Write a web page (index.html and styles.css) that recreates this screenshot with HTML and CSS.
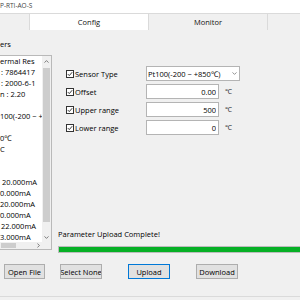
FILE: index.html
```html
<!DOCTYPE html>
<html lang="en">
<head>
  <meta charset="UTF-8" />
  <meta name="viewport" content="width=device-width, initial-scale=1.0"/>
  <title>P-RTI-AO-S Config</title>
  <link rel="stylesheet" href="styles.css">
</head>
<body>
  <div class="window">
    <div class="titlebar">P-RTI-AO-S</div>

    <div class="tabs">
      <div class="tab tab-edge"></div>
      <div class="tab active">Config</div>
      <div class="tab">Monitor</div>
      <div class="tab tab-rest"></div>
    </div>

    <div class="panel">
      <div class="body">
        <div class="params">
          <div class="group-label">ers</div>
          <div class="listbox">
            <div class="list-items">
              <div>ermal Res</div>
              <div class="in1">: 7864417</div>
              <div class="in1">: 2000-6-1</div>
              <div>n : 2.20</div>
              <div></div>
              <div>100(-200 ~ +</div>
              <div></div>
              <div>0℃</div>
              <div>C</div>
              <div></div>
              <div></div>
              <div class="in2">20.000mA</div>
              <div>0.000mA</div>
              <div>20.000mA</div>
              <div>0.000mA</div>
              <div class="in1">22.000mA</div>
              <div>3.000mA</div>
            </div>
            <div class="vscroll">
              <span class="arrow">
                <svg width="5" height="3" viewBox="0 0 5 3"><path d="M0.5 2.6 L2.5 0.6 L4.5 2.6" fill="none" stroke="#606060" stroke-width="0.8"/></svg>
              </span>
              <div class="vthumb"></div>
              <div class="track"></div>
              <span class="arrow">
                <svg width="5" height="3" viewBox="0 0 5 3"><path d="M0.5 0.4 L2.5 2.4 L4.5 0.4" fill="none" stroke="#606060" stroke-width="0.8"/></svg>
              </span>
            </div>
            <div class="hscroll">
              <div class="hthumb"></div>
              <span class="arrow">
                <svg width="3" height="5" viewBox="0 0 3 5"><path d="M0.4 0.5 L2.4 2.5 L0.4 4.5" fill="none" stroke="#606060" stroke-width="0.8"/></svg>
              </span>
            </div>
            <div class="corner"></div>
          </div>
        </div>

        <div class="config">
          <div class="form">
            <label class="check"><span class="box"><svg width="6" height="6" viewBox="0 0 6 6"><path d="M0.8 3.1 L2.3 4.6 L5.2 1.2" fill="none" stroke="#222" stroke-width="0.9"/></svg></span>Sensor Type</label>
            <div class="combo">
              <span>Pt100(-200 ~ +850℃)</span>
              <svg width="5" height="3" viewBox="0 0 5 3"><path d="M0.5 0.4 L2.5 2.4 L4.5 0.4" fill="none" stroke="#777" stroke-width="0.8"/></svg>
            </div>

            <label class="check"><span class="box"><svg width="6" height="6" viewBox="0 0 6 6"><path d="M0.8 3.1 L2.3 4.6 L5.2 1.2" fill="none" stroke="#222" stroke-width="0.9"/></svg></span>Offset</label>
            <input class="num" type="text" value="0.00">
            <span class="unit">℃</span>

            <label class="check"><span class="box"><svg width="6" height="6" viewBox="0 0 6 6"><path d="M0.8 3.1 L2.3 4.6 L5.2 1.2" fill="none" stroke="#222" stroke-width="0.9"/></svg></span>Upper range</label>
            <input class="num" type="text" value="500">
            <span class="unit">℃</span>

            <label class="check"><span class="box"><svg width="6" height="6" viewBox="0 0 6 6"><path d="M0.8 3.1 L2.3 4.6 L5.2 1.2" fill="none" stroke="#222" stroke-width="0.9"/></svg></span>Lower range</label>
            <input class="num" type="text" value="0">
            <span class="unit">℃</span>
          </div>

          <div class="status">Parameter Upload Complete!</div>
          <div class="progress"><div class="progress-fill" style="width:100%"></div></div>
        </div>
      </div>

      <div class="buttons">
        <button class="btn btn-open">Open File</button>
        <button class="btn">Select None</button>
        <button class="btn btn-default">Upload</button>
        <button class="btn">Download</button>
      </div>
    </div>
  </div>
</body>
</html>
```

FILE: styles.css
```css
body {
  margin: 0;
  background: #f0f0f0;
  font-family: "Open Sans", "Noto Sans", "Noto Sans CJK SC", sans-serif;
  font-size: 7.5px;
  color: #000;
  overflow: hidden;
}
.window {
  width: 300px;
  height: 300px;
  display: flex;
  flex-direction: column;
}
.titlebar {
  height: 13px;
  line-height: 12px;
  background: #fff;
  font-size: 6.5px;
  color: #444;
  white-space: nowrap;
}

/* tab strip */
.tabs {
  display: flex;
  height: 17px;
  background: #fff;
}
.tab {
  width: 120px;
  box-sizing: border-box;
  border: 1px solid #dadada;
  border-bottom: none;
  margin-right: -1px;
  background: #f0f0f0;
  text-align: center;
  line-height: 16px;
  color: #111;
}
.tab-edge {
  width: 30px;
  border-left: none;
}
.tab-rest {
  flex: 1;
  border-right: none;
  margin-right: 0;
}
.tab.active {
  background: #fff;
  position: relative;
  z-index: 1;
}

.panel {
  flex: 1;
  display: flex;
  flex-direction: column;
  border-bottom: 1px solid #dadada;
  margin-bottom: 3px;
}
.body {
  height: 223px;
  display: flex;
}

/* left list */
.params {
  width: 52px;
  padding-top: 9px;
}
.group-label {
  line-height: 11px;
  white-space: nowrap;
}
.listbox {
  margin-top: 5px;
  height: 195px;
  box-sizing: border-box;
  border: 1px solid #b9b9b9;
  border-left: none;
  background: #fff;
  display: grid;
  grid-template-columns: 1fr 9px;
  grid-template-rows: 1fr 7px;
  overflow: hidden;
}
.list-items {
  overflow: hidden;
  white-space: nowrap;
}
.list-items div {
  height: 11px;
  line-height: 11px;
}
.list-items .in1 {
  padding-left: 1px;
}
.list-items .in2 {
  padding-left: 2px;
}
.vscroll {
  background: #f0f0f0;
  display: flex;
  flex-direction: column;
  align-items: center;
}
.vscroll .arrow {
  height: 10px;
  display: flex;
  align-items: center;
  justify-content: center;
}
.vthumb {
  margin-top: 2px;
  width: 7px;
  height: 154px;
  background: #cdcdcd;
}
.track {
  flex: 1;
}
.hscroll {
  background: #f0f0f0;
  display: flex;
  align-items: center;
}
.hthumb {
  width: 15px;
  height: 5px;
  margin-left: 1px;
  background: #cdcdcd;
}
.hscroll .arrow {
  margin-left: auto;
  width: 8px;
  display: flex;
  justify-content: center;
}
.corner {
  background: #f0f0f0;
}

/* right side */
.config {
  flex: 1;
  min-width: 0;
  padding-left: 6px;
  display: flex;
  flex-direction: column;
}
.form {
  margin-top: 36px;
  padding-left: 8px;
  display: grid;
  grid-template-columns: 80px 73px 1fr;
  grid-auto-rows: 15px;
  row-gap: 3px;
  align-items: center;
}
.check {
  display: flex;
  align-items: center;
  gap: 1px;
  white-space: nowrap;
}
.box {
  width: 6px;
  height: 6px;
  border: 1px solid #333;
  background: #fff;
  display: flex;
  align-items: center;
  justify-content: center;
}
.combo {
  grid-column: span 2;
  width: 94px;
  height: 15px;
  box-sizing: border-box;
  border: 1px solid #b4b4b4;
  background: #fff;
  display: flex;
  align-items: center;
  justify-content: space-between;
  padding: 0 2px 0 1px;
  white-space: nowrap;
}
.num {
  width: 73px;
  height: 15px;
  box-sizing: border-box;
  border: 1px solid #b4b4b4;
  background: #fff;
  padding: 0 2px;
  margin: 0;
  text-align: right;
  font-family: inherit;
  font-size: 7.5px;
  color: #000;
}
.unit {
  padding-left: 6px;
  font-size: 7px;
  color: #333;
}
.status {
  margin-top: auto;
  line-height: 11px;
  margin-bottom: 6px;
  white-space: nowrap;
}
.progress {
  height: 7px;
  box-sizing: border-box;
  border: 1px solid #bcbcbc;
  border-right: none;
  background: #e6e6e6;
}
.progress-fill {
  height: 100%;
  background: #06b025;
}

/* button row */
.buttons {
  display: flex;
  gap: 26px;
  padding-left: 4px;
  margin-top: 11px;
}
.btn {
  width: 42px;
  height: 15px;
  padding: 0;
  box-sizing: border-box;
  border: 1px solid #adadad;
  background: #e1e1e1;
  font-family: inherit;
  font-size: 7.5px;
  color: #000;
  display: flex;
  align-items: center;
  justify-content: center;
  white-space: nowrap;
  overflow: hidden;
}
.btn-open {
  width: 41px;
  margin-right: -11px;
}
.btn-default {
  border-color: #0078d7;
}
```
